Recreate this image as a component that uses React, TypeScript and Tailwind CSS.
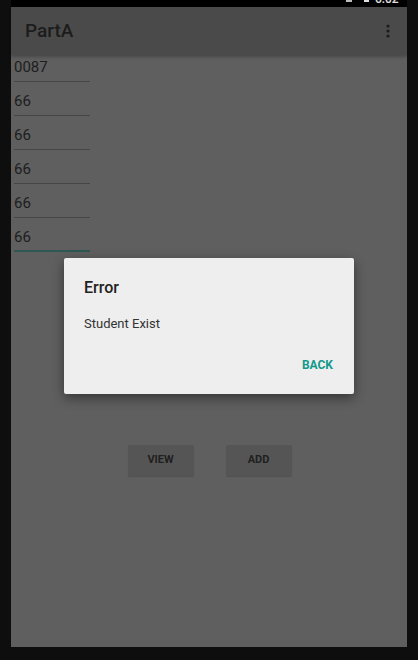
const fields = ["0087", "66", "66", "66", "66", "66"];

export default function App() {
  return (
    <div className="h-[660px] w-[418px] bg-[#0e0e0e] font-['Roboto',sans-serif]">
      <div className="mx-[11px] flex h-[647px] flex-col bg-[#5f5f5f]">
        {/* status bar, mostly cut off */}
        <div className="relative h-[7px] shrink-0 overflow-hidden bg-black">
          <div className="absolute left-[335px] top-[-3px] h-[5px] w-[6px] bg-[#bdbdbd]" />
          <div className="absolute left-[353px] top-[-3px] h-[5px] w-[5px] bg-[#e0e0e0]" />
          <div className="absolute left-[364px] top-[-10px] text-[12px] font-medium text-[#e0e0e0]">6:02</div>
        </div>

        {/* app bar */}
        <div className="relative flex h-[48px] shrink-0 items-center justify-between bg-[#4a4a4a] pl-[14px] pr-[16px] shadow-[0_2px_3px_rgba(0,0,0,0.25)]">
          <span className="text-[19px] font-medium text-[#1c1c1c]">PartA</span>
          <svg width="4" height="14" viewBox="0 0 4 14" className="mr-[1px]">
            <circle cx="2" cy="2" r="1.6" fill="#1c1c1c" />
            <circle cx="2" cy="7" r="1.6" fill="#1c1c1c" />
            <circle cx="2" cy="12" r="1.6" fill="#1c1c1c" />
          </svg>
        </div>

        {/* form */}
        <div className="relative flex-1">
          <div className="flex flex-col pl-[3px]">
            {fields.map((v, i) => (
              <div
                key={i}
                className={
                  i === 0
                    ? "flex h-[27px] w-[76px] items-end border-b border-[#464646] pb-[6px] text-[15px] leading-none text-[#1d1d1d]"
                    : i === fields.length - 1
                      ? "flex h-[34px] w-[76px] items-end border-b-[2px] border-[#2d5952] pb-[5px] text-[15px] leading-none text-[#1d1d1d]"
                      : "flex h-[34px] w-[76px] items-end border-b border-[#464646] pb-[6px] text-[15px] leading-none text-[#1d1d1d]"
                }
              >
                {v}
              </div>
            ))}
          </div>

          <div className="mt-[193px] flex justify-center gap-[32px] pl-[1px]">
            <div className="flex h-[31px] w-[66px] items-center justify-center rounded-[2px] bg-[#555555] text-[11px] font-bold text-[#1f1f1f] shadow-[0_1px_1px_rgba(0,0,0,0.15)]">
              VIEW
            </div>
            <div className="flex h-[31px] w-[66px] items-center justify-center rounded-[2px] bg-[#555555] text-[11px] font-bold text-[#1f1f1f] shadow-[0_1px_1px_rgba(0,0,0,0.15)]">
              ADD
            </div>
          </div>

          {/* dialog */}
          <div className="absolute left-[53px] top-[203px] flex h-[136px] w-[290px] flex-col rounded-[2px] bg-[#eeeeee] px-[20px] shadow-[0_4px_12px_rgba(0,0,0,0.45)]">
            <div className="mt-[18px] text-[16px] font-medium text-[#222222]">Error</div>
            <div className="mt-[14px] text-[13px] text-[#333333]">Student Exist</div>
            <div className="mt-[22px] flex justify-end pr-[1px]">
              <span className="text-[12px] font-bold text-[#11998a]">BACK</span>
            </div>
          </div>
        </div>
      </div>
    </div>
  );
}
